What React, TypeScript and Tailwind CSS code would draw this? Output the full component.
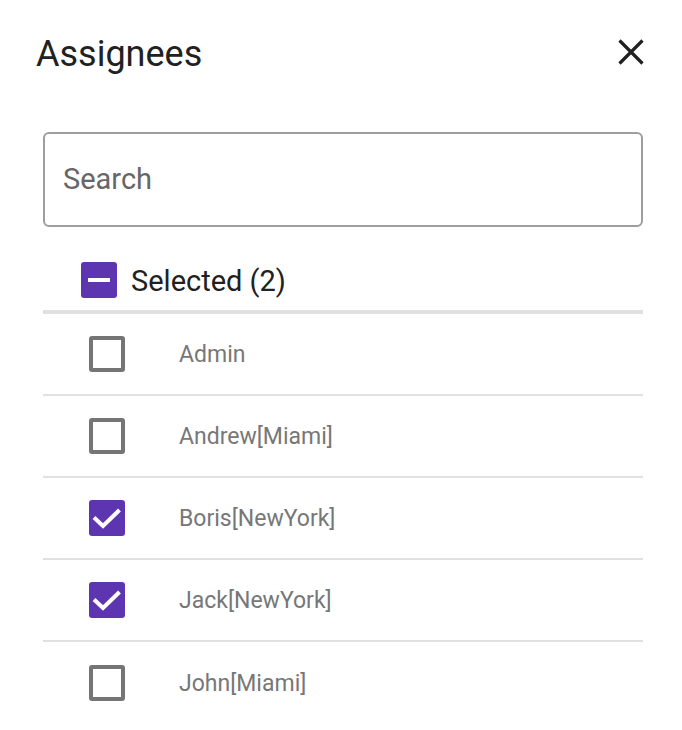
import React from "react";

type Person = {
  name: string;
  checked: boolean;
};

const people: Person[] = [
  { name: "Admin", checked: false },
  { name: "Andrew[Miami]", checked: false },
  { name: "Boris[NewYork]", checked: true },
  { name: "Jack[NewYork]", checked: true },
  { name: "John[Miami]", checked: false },
];

function Box({ checked }: { checked: boolean }) {
  if (checked) {
    return (
      <div className="w-[36px] h-[36px] rounded-[3px] bg-[#5e35b1] shrink-0">
        <svg width="36" height="36" viewBox="0 0 36 36">
          <polyline points="5,17.5 14,26 30.5,10" fill="none" stroke="#fff" strokeWidth="4" />
        </svg>
      </div>
    );
  }
  return <div className="w-[36px] h-[36px] rounded-[3px] border-[4px] border-[#757575] shrink-0" />;
}

export default function App() {
  return (
    <div className="w-[682px] h-[730px] bg-white font-['Roboto',sans-serif] overflow-hidden">
      {/* header */}
      <div className="flex items-start justify-between pl-[36px] pr-[37px] pt-[35px]">
        <h1 className="text-[36px] leading-[38px] text-[#212121] font-normal">Assignees</h1>
        <button className="mt-[3px]">
          <svg width="28" height="28" viewBox="0 0 28 28">
            <path d="M2.5 2.5L25.5 25.5M25.5 2.5L2.5 25.5" stroke="#212121" strokeWidth="3.2" />
          </svg>
        </button>
      </div>

      <div className="ml-[43px] w-[600px]">
        <div className="mt-[59px] h-[95px] border-2 border-[#9e9e9e] rounded-[6px] flex items-center pl-[18px]">
          <input
            placeholder="Search"
            className="w-full outline-none text-[29px] text-[#212121] placeholder:text-[#666666] bg-transparent"
          />
        </div>

        {/* select all */}
        <div className="mt-[35px] h-[36px] flex items-center gap-[14px] pl-[38px]">
          <div className="w-[36px] h-[36px] rounded-[3px] bg-[#5e35b1] flex items-center justify-center">
            <div className="w-[22px] h-[4px] bg-white" />
          </div>
          <span className="text-[29px] leading-[34px] text-[#212121] pt-[2px]">Selected (2)</span>
        </div>
        <div className="mt-[12px] h-[4px] bg-[#e0e0e0]" />

        <div className="divide-y-2 divide-[#e0e0e0]">
          {people.map((p) => (
            <div key={p.name} className="h-[82px] flex items-center pl-[46px] gap-[54px]">
              <Box checked={p.checked} />
              <span className="text-[23px] text-[#777777] pt-[2px]">{p.name}</span>
            </div>
          ))}
        </div>
      </div>
    </div>
  );
}
